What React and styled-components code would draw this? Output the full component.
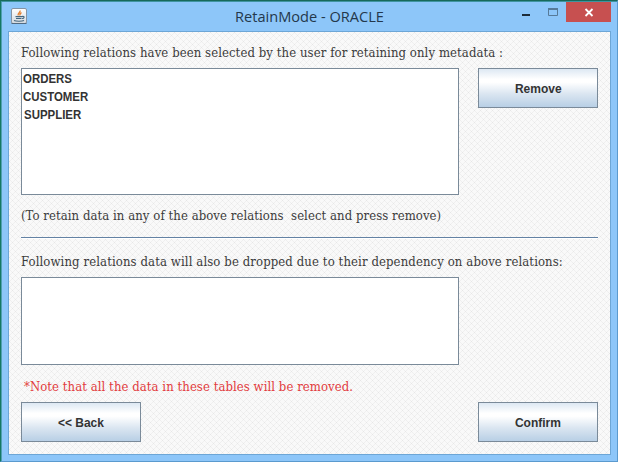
import React from "react";
import styled, { createGlobalStyle } from "styled-components";

const GlobalStyle = createGlobalStyle`
  * { box-sizing: border-box; }
  body { margin: 0; overflow: hidden; }
`;

const Window = styled.div`
  display: flex;
  flex-direction: column;
  width: 618px;
  height: 462px;
  padding: 0 6px 6px 7px;
  background: #8dc6f9;
  border: 1px solid #5b9ace;
  border-top-color: #17695a;
  border-left: 1px solid #157863;
  box-shadow: inset 0 1px #3f94a0, inset 1px 0 #4fa0b0;
`;

const TitleBar = styled.header`
  display: grid;
  grid-template-columns: 92px 1fr 92px;
  flex: none;
  height: 30px;
`;

const AppIcon = styled.svg`
  width: 16px;
  height: 16px;
  margin: 7px 0 0 3px;
`;

const Title = styled.h1`
  margin: 0;
  padding: 1px 0 0;
  font: 400 14.6px/29px "Open Sans", "Noto Sans", sans-serif;
  text-align: center;
  white-space: nowrap;
  color: #24384c;
`;

const Controls = styled.div`
  display: flex;
  justify-content: flex-end;
  padding-top: 1px;
`;

const ControlIcon = styled.svg`
  width: ${(p) => p.$width}px;
  height: 20px;
  flex: none;
  background: ${(p) => p.$fill || "transparent"};
`;

const Content = styled.main`
  flex: 1;
  display: flex;
  flex-direction: column;
  align-items: stretch;
  padding: 11px 12px 0;
  border: 1px solid #6da6d6;
  background-color: #f9f9f9;
  background-clip: padding-box;
  background-image:
    repeating-linear-gradient(45deg, transparent 0 3.2px, rgba(110, 110, 110, 0.065) 3.2px 4.24264px),
    repeating-linear-gradient(-45deg, transparent 0 3.2px, rgba(110, 110, 110, 0.065) 3.2px 4.24264px);
`;

const Message = styled.p`
  margin: 0;
  height: ${(p) => p.$height}px;
  padding: ${(p) => p.$top || 0}px 0 0 ${(p) => p.$indent || 0}px;
  font: 13px/20px "DejaVu Serif Condensed", "DejaVu Serif", serif;
  font-stretch: condensed;
  letter-spacing: ${(p) => p.$tracking || 0}px;
  white-space: pre;
  color: ${(p) => (p.$alert ? "#e23c40" : "#3c3c3c")};
`;

const Row = styled.div`
  display: flex;
  justify-content: space-between;
  align-items: flex-start;
`;

const ListBox = styled.ul`
  flex: none;
  width: 438px;
  height: ${(p) => p.$height}px;
  margin: 0;
  padding: 1px;
  list-style: none;
  background: #fff;
  border: 1px solid #7a8a99;
`;

const ListItem = styled.li`
  height: 18px;
  padding-left: ${(p) => p.$indent || 0}px;
  font: 700 13px/18px "Liberation Sans", Arial, sans-serif;
  color: #333;
`;

const Button = styled.button`
  width: 120px;
  height: 40px;
  padding: 2px 0 0;
  border: 1px solid #7a8a99;
  border-radius: 0;
  background: linear-gradient(#dde8f3 0%, #fff 27%, #fff 35%, #dbe6f1 65%, #b8cfe5 100%);
  font: 700 13px/36px "Liberation Sans", Arial, sans-serif;
  color: #333;
`;

const Narrow = styled.span`
  display: inline-block;
  transform: scaleX(${(p) => p.$scale});
  transform-origin: ${(p) => p.$origin || "center"};
`;

const Divider = styled.div`
  width: 577px;
  height: 2px;
  margin: 0 0 13px;
  border-top: 1px solid #6382a4;
  background: #fff;
`;

const relations = [
  { name: "ORDERS" },
  { name: "CUSTOMER" },
  { name: "SUPPLIER", indent: 1 },
];

function JavaIcon() {
  return (
    <AppIcon viewBox="0 0 16 16">
      <defs>
        <linearGradient id="tile" x2="0" y2="1">
          <stop stopColor="#fff" />
          <stop offset="1" stopColor="#d2d9df" />
        </linearGradient>
      </defs>
      <rect x=".5" y=".5" width="15" height="15" rx="1.5" fill="url(#tile)" stroke="#8594a4" />
      <path d="M0.5 15.5h15" stroke="#526a80" />
      <path d="M9 2.5c1 2-3 2.5-1.7 5M10.5 4.6C8.7 5.4 8.6 6 9 7.5" fill="none" stroke="#e48131" strokeWidth="1.3" />
      <path d="M4.5 8.7h6.5M5 10.5h5.5M11 8.5c3-.8 2.5 2 0 2M3 12.5c2 1 8 1 10 0" fill="none" stroke="#45677f" strokeWidth="1.2" />
    </AppIcon>
  );
}

function PushButton({ children }) {
  return (
    <Button>
      <Narrow $scale={0.923}>{children}</Narrow>
    </Button>
  );
}

export default function App() {
  return (
    <>
      <GlobalStyle />
      <Window>
        <TitleBar>
          <JavaIcon />
          <Title>RetainMode - ORACLE</Title>
          <Controls>
            <ControlIcon $width={25} viewBox="0 0 25 20">
              <path d="M2 12h8v2H2z" fill="#1d2c3a" />
            </ControlIcon>
            <ControlIcon $width={21} viewBox="0 0 21 20">
              <path d="M3.5 7v6.5h9V7" fill="none" stroke="#567a99" />
              <path d="M3 6h10v2H3z" fill="#567a99" />
            </ControlIcon>
            <ControlIcon $width={45} $fill="#c75050" viewBox="0 0 45 20">
              <path d="M19.5 7l7 7M26.5 7l-7 7" stroke="#fff" strokeWidth="1.8" />
            </ControlIcon>
          </Controls>
        </TitleBar>
        <Content>
          <Message $height={25} $tracking={0.08}>
            Following relations have been selected by the user for retaining only metadata :
          </Message>
          <Row>
            <ListBox $height={127}>
              {relations.map((r) => (
                <ListItem key={r.name} $indent={r.indent}>
                  <Narrow $scale={0.88} $origin="left">{r.name}</Narrow>
                </ListItem>
              ))}
            </ListBox>
            <PushButton>Remove</PushButton>
          </Row>
          <Message $height={42} $top={11} $tracking={0.06}>
            {"(To retain data in any of the above relations  select and press remove)"}
          </Message>
          <Divider />
          <Message $height={25} $tracking={0.105}>
            Following relations data will also be dropped due to their dependency on above relations:
          </Message>
          <ListBox $height={88} />
          <Message $alert $height={37} $top={12} $indent={3} $tracking={0.06}>
            *Note that all the data in these tables will be removed.
          </Message>
          <Row>
            <PushButton>{"<< Back"}</PushButton>
            <PushButton>Confirm</PushButton>
          </Row>
        </Content>
      </Window>
    </>
  );
}
